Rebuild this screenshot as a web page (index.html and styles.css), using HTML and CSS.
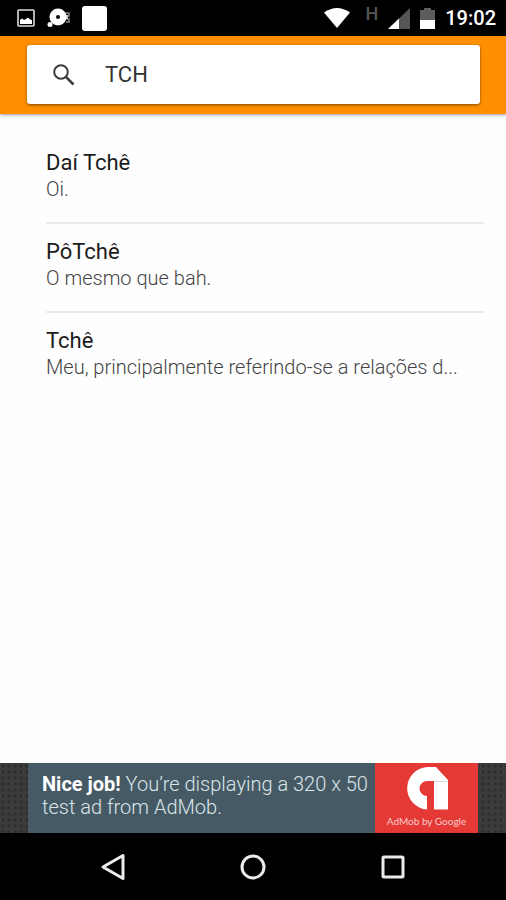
FILE: index.html
```html
<!DOCTYPE html>
<html lang="pt-BR">
<head>
<meta charset="utf-8">
<meta name="viewport" content="width=device-width, initial-scale=1">
<title>Tchê</title>
<link rel="stylesheet" href="styles.css">
</head>
<body>
<header class="status">
  <div class="status-left">
    <svg width="18" height="18" viewBox="0 0 18 18"><rect x="1" y="1" width="16" height="16" rx="1" fill="none" stroke="#ddd" stroke-width="1.6"/><path d="M3 15v-4l2-1.500 2 1.500 2-1 2-1.500 2 2 2 .500v4z" fill="#fff"/></svg>
    <svg width="23" height="20" viewBox="0 0 23 20"><path d="M18 5h4v3h-2v3h2v3h-3" fill="none" stroke="#888" stroke-width="1.500"/><path d="M17 7h4v4h-4z" fill="#ccc"/><circle cx="11" cy="9" r="8.500" fill="#fff"/><circle cx="11" cy="9" r="2" fill="#000"/><circle cx="3" cy="16.500" r="2.500" fill="#fff"/></svg>
    <svg width="25" height="25" viewBox="0 0 25 25"><rect width="25" height="25" rx="3" fill="#fff"/></svg>
  </div>
  <div class="status-right">
    <svg class="wifi" width="26" height="20" viewBox="0 0 26 20"><path d="M0 4.500Q13-4.500 26 4.500L13 20z" fill="#fff"/></svg>
    <span class="network">H</span>
    <svg width="22" height="21" viewBox="0 0 22 21"><path d="M22 0v21H0z" fill="#555"/><path d="M11 10.500V21H0z" fill="#fff"/></svg>
    <svg width="15" height="21" viewBox="0 0 15 21"><path d="M4 0h7v2h4v11H0V2h4z" fill="#5c5c5c"/><path d="M0 12h15v9H0z" fill="#fff"/></svg>
    <time class="clock">19:02</time>
  </div>
</header>
<div class="toolbar">
  <form class="search" role="search">
    <svg width="22" height="22" viewBox="0 0 22 22" fill="none" stroke="#3c3c3c"><circle cx="8" cy="8" r="6.800" stroke-width="2"/><path d="M12.700 12.700l7.800 7.800" stroke-width="2.600"/></svg>
    <input class="search-input" type="text" value="TCH" aria-label="Buscar">
  </form>
</div>
<main class="content">
  <ul class="results">
    <li class="result"><h2 class="term">Daí Tchê</h2><p class="meaning">Oi.</p></li>
    <li class="result"><h2 class="term">PôTchê</h2><p class="meaning">O mesmo que bah.</p></li>
    <li class="result"><h2 class="term">Tchê</h2><p class="meaning">Meu, principalmente referindo-se a relações d...</p></li>
  </ul>
</main>
<aside class="ad">
  <p class="ad-text"><strong>Nice job!</strong> You’re displaying a 320 x 50 test ad from AdMob.</p>
  <div class="ad-brand">
    <svg width="43" height="43" viewBox="0 0 43 43"><path d="M22 42.500A21.300 21.300 0 0 1 22 0h9l12 13v29.500H29V14h-7a7.500 7.500 0 0 0 0 15z" fill="#fff"/><path d="M29 14h14v1H29z" fill="#ddd"/></svg>
    <span class="ad-caption">AdMob by <b>Google</b></span>
  </div>
</aside>
<nav class="nav">
  <button class="nav-button" type="button" aria-label="Voltar"><svg width="26" height="28" viewBox="0 0 26 28"><path d="M3 14L23 2.500v23z"/></svg></button>
  <button class="nav-button" type="button" aria-label="Início"><svg width="26" height="28" viewBox="0 0 26 28"><circle cx="13" cy="14" r="11"/></svg></button>
  <button class="nav-button" type="button" aria-label="Recentes"><svg width="26" height="28" viewBox="0 0 26 28"><rect x="3" y="4" width="20" height="20" rx="1"/></svg></button>
</nav>
</body>
</html>
```
FILE: styles.css
```css
* { box-sizing: border-box; }

body {
  margin: 0;
  min-height: 100vh;
  display: flex;
  flex-direction: column;
  background: #fefefe;
  font-family: Roboto, "Liberation Sans", sans-serif;
}

svg { display: block; flex: none; }

.status {
  display: flex;
  justify-content: space-between;
  height: 36px;
  padding: 0 10px 0 17px;
  background: #000;
  color: #fff;
}

.status-left,
.status-right {
  display: flex;
  align-items: center;
}

.status-left { gap: 12px; }
.status-right { gap: 10px; }

.wifi { margin-right: 5px; }

.network {
  padding-bottom: 8px;
  color: #555;
  font-size: 18px;
  font-weight: 500;
  line-height: 20px;
}

.clock {
  font-size: 20px;
  font-weight: 500;
  line-height: 36px;
}

.toolbar {
  padding: 9px 26px 10px 27px;
  background: #ff8f00;
  box-shadow: 0 1px 3px rgba(0, 0, 0, 0.4);
}

.search {
  display: flex;
  align-items: center;
  gap: 30px;
  height: 59px;
  padding: 0 26px;
  border-radius: 3px;
  background: #fff;
  box-shadow: 0 1px 3px rgba(0, 0, 0, 0.5);
}

.search-input {
  flex: 1;
  min-width: 0;
  padding: 0;
  border: 0;
  outline: 0;
  background: none;
  color: #333;
  font: 400 22px/28px Roboto, "Liberation Sans", sans-serif;
}

.content {
  flex: 1;
  padding: 21px 22px 0 46px;
}

.results {
  margin: 0;
  padding: 0;
  list-style: none;
}

.result { padding: 14px 0 20px; }

.result + .result { border-top: 2px solid #e9e9e9; }

.term {
  margin: 0;
  color: #1c1c1c;
  font-size: 22px;
  font-weight: 400;
  line-height: 28px;
}

.meaning {
  margin: 0;
  color: #444;
  font-size: 20px;
  font-weight: 300;
  line-height: 25px;
}

.ad {
  display: flex;
  height: 70px;
  padding: 0 28px;
  background: radial-gradient(circle, #2d2d2d 1px, #3b3b3b 2px) 0 0 / 6px 6px;
}

.ad-text {
  flex: 1;
  margin: 0;
  padding: 10px 0 0 14px;
  background: #455a64;
  color: #dce5ea;
  font-size: 20px;
  font-weight: 300;
  line-height: 23px;
}

.ad-text strong {
  color: #fff;
  font-weight: 700;
}

.ad-brand {
  display: flex;
  flex-direction: column;
  align-items: center;
  gap: 4px;
  width: 103px;
  padding-top: 4px;
  background: #e53935;
  color: #f9cac9;
}

.ad-caption {
  font-family: Lato, sans-serif;
  font-size: 10px;
  line-height: 14px;
  white-space: nowrap;
}

.ad-caption b { font-weight: 400; }

.nav {
  display: flex;
  justify-content: center;
  gap: 84px;
  height: 67px;
  background: #000;
}

.nav-button {
  width: 56px;
  padding: 0;
  border: 0;
  background: none;
}

.nav-button svg {
  margin: 0 auto;
  fill: none;
  stroke: #ececec;
  stroke-width: 3;
  stroke-linejoin: round;
}
```
